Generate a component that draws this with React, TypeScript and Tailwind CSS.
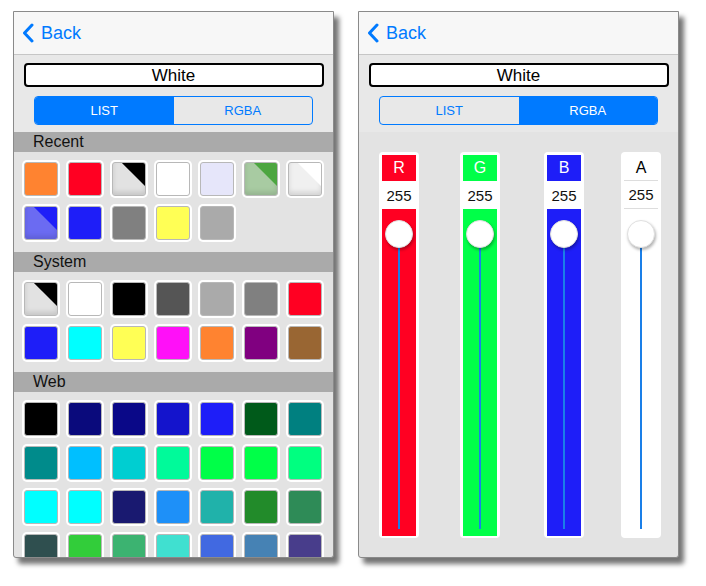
import React from "react";

type Swatch = { c: string; a?: string };

const recent: Swatch[] = [
  { c: "#ff8330" },
  { c: "#ff0022" },
  { c: "#000000", a: "#e2e2e2" },
  { c: "#ffffff" },
  { c: "#e6e6fa" },
  { c: "#4ca640", a: "#a8cba2" },
  { c: "#ffffff", a: "#f0f0f0" },
  { c: "#1e1ef8", a: "#6b6bf2" },
  { c: "#1e1ef8" },
  { c: "#808080" },
  { c: "#ffff55" },
  { c: "#aaaaaa" },
];

const system: Swatch[] = [
  { c: "#000000", a: "#e2e2e2" },
  { c: "#ffffff" },
  { c: "#000000" },
  { c: "#555555" },
  { c: "#aaaaaa" },
  { c: "#808080" },
  { c: "#ff0022" },
  { c: "#1e1ef8" },
  { c: "#00ffff" },
  { c: "#ffff55" },
  { c: "#ff10f8" },
  { c: "#ff8330" },
  { c: "#800080" },
  { c: "#996633" },
];

const web: Swatch[] = [
  "#000000", "#0a0a7c", "#0a0888", "#1414cc", "#1e1ef8", "#005a1a", "#008080",
  "#008b8b", "#00bfff", "#00ced1", "#00fa9a", "#00ff48", "#00ff48", "#00ff80",
  "#00ffff", "#00ffff", "#191970", "#1e90f8", "#20b2aa", "#228b2a", "#2e8b57",
  "#2f4f4f", "#32cd3a", "#3cb371", "#40e0d0", "#4169e1", "#4682b4", "#483d8b",
].map((c) => ({ c }));

const Header: React.FC = () => (
  <div className="shrink-0 h-[43px] bg-[#f7f7f7] border-b border-[#c6c6c6] flex items-center pl-[8px] gap-[7px] text-[#007aff]">
    <svg width="12" height="20" viewBox="0 0 12 20">
      <polyline points="10,2 2.5,10 10,18" fill="none" stroke="#007aff" strokeWidth="3" strokeLinecap="round" strokeLinejoin="round" />
    </svg>
    <span className="text-[18px] leading-none">Back</span>
  </div>
);

const Toolbar: React.FC<{ tab: "list" | "rgba" }> = ({ tab }) => (
  <div className="shrink-0 h-[77px] bg-[#e8e8e8] pt-[8px] flex flex-col items-center">
    <div className="w-[300px] h-[24px] bg-white border-2 border-black rounded-[4px] flex items-center justify-center text-[17px] leading-none text-black">
      White
    </div>
    <div className="mt-[9px] w-[279px] h-[29px] border border-[#007aff] rounded-[4px] flex overflow-hidden text-[13px]">
      <div className={tab === "list" ? "flex-1 flex items-center justify-center bg-[#007aff] text-white" : "flex-1 flex items-center justify-center text-[#007aff]"}>
        LIST
      </div>
      <div className={tab === "rgba" ? "flex-1 flex items-center justify-center bg-[#007aff] text-white" : "flex-1 flex items-center justify-center text-[#007aff]"}>
        RGBA
      </div>
    </div>
  </div>
);

const SwatchBox: React.FC<{ s: Swatch }> = ({ s }) => (
  <div className="w-[38px] h-[38px] bg-white rounded-[5px] p-[2px]">
    <div
      className={
        "relative w-full h-full rounded-[3px] border border-[#b8b8b8] overflow-hidden " +
        (s.a ? "shadow-[inset_0_-3px_5px_rgba(0,0,0,0.12)]" : "")
      }
      style={{ backgroundColor: s.a ?? s.c }}
    >
      {s.a && (
        <div
          className="absolute inset-0 [clip-path:polygon(28%_0,100%_0,100%_72%)]"
          style={{ backgroundColor: s.c }}
        />
      )}
    </div>
  </div>
);

const Section: React.FC<{ title: string; items: Swatch[] }> = ({ title, items }) => (
  <div className="shrink-0">
    <div className="h-[20px] bg-[#aaaaaa] pl-[19px] text-[16px] leading-[20px] text-[#111]">{title}</div>
    <div className="grid grid-cols-[repeat(7,38px)] gap-x-[6px] gap-y-[6px] pl-[8px] pt-[8px] pb-[10px]">
      {items.map((s, i) => (
        <SwatchBox key={i} s={s} />
      ))}
    </div>
  </div>
);

const Panel: React.FC<{ children: React.ReactNode }> = ({ children }) => (
  <div className="w-[321px] h-[547px] shrink-0 border border-[#8a8a8a] rounded-b-[3px] bg-[#e3e3e3] overflow-hidden shadow-[5px_6px_5px_rgba(0,0,0,0.55)] flex flex-col">
    {children}
  </div>
);

const channels = [
  { l: "R", c: "#ff0022", m: "ml-[20px]" },
  { l: "G", c: "#00ff48", m: "ml-[41px]" },
  { l: "B", c: "#1e1ef8", m: "ml-[44px]" },
  { l: "A", c: "", m: "ml-[37px]" },
];

const SliderColumn: React.FC<{ l: string; c: string; m: string }> = ({ l, c, m }) => {
  const alpha = c === "";
  return (
    <div className={"w-[40px] h-[386px] bg-white rounded-[4px] px-[3px] pt-[3px] pb-[2px] flex flex-col " + m}>
      <div
        className={"h-[26px] flex items-center justify-center text-[16px] leading-none " + (alpha ? "text-black border-b border-[#dddddd]" : "text-white")}
        style={alpha ? undefined : { backgroundColor: c }}
      >
        {l}
      </div>
      <div className={"h-[28px] flex items-center justify-center text-[15px] leading-none text-[#111] " + (alpha ? "border-b border-[#dddddd]" : "")}>
        255
      </div>
      <div className="relative flex-1 flex justify-center" style={alpha ? undefined : { backgroundColor: c }}>
        <div className="mt-[24px] mb-[7px] w-[2px] bg-[#1a7fe8]" />
        <div className="absolute top-[11px] left-1/2 -translate-x-1/2 w-[28px] h-[28px] rounded-full bg-white border border-[#e0e0e0] shadow-[1px_2px_3px_rgba(0,0,0,0.3)]" />
      </div>
    </div>
  );
};

export default function App() {
  return (
    <div className="w-[706px] h-[586px] bg-white font-['Liberation_Sans',Arial,sans-serif] flex items-start pt-[11px] pl-[13px] gap-[24px]">
      <Panel>
        <Header />
        <Toolbar tab="list" />
        <Section title="Recent" items={recent} />
        <Section title="System" items={system} />
        <Section title="Web" items={web} />
      </Panel>
      <Panel>
        <Header />
        <Toolbar tab="rgba" />
        <div className="flex pt-[20px]">
          {channels.map((ch) => (
            <SliderColumn key={ch.l} l={ch.l} c={ch.c} m={ch.m} />
          ))}
        </div>
      </Panel>
    </div>
  );
}
